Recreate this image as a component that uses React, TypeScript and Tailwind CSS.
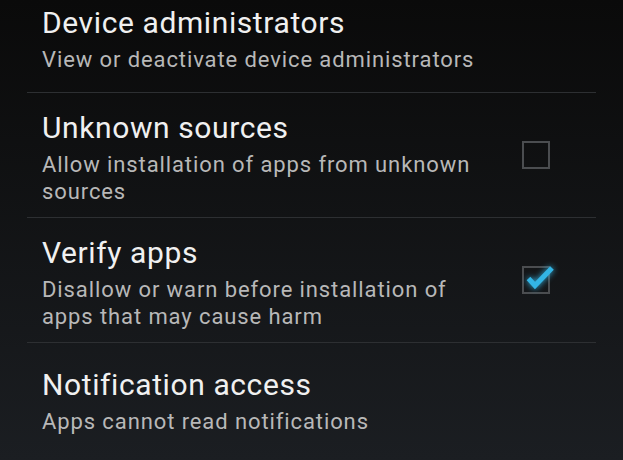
const rows = [
    { title: 'Device administrators', summary: ['View or deactivate device administrators'] },
    { title: 'Unknown sources', summary: ['Allow installation of apps from unknown', 'sources'], check: false },
    { title: 'Verify apps', summary: ['Disallow or warn before installation of', 'apps that may cause harm'], check: true },
    { title: 'Notification access', summary: ['Apps cannot read notifications'] },
]

function CheckBox({ checked }: { checked: boolean }) {
    return (
        <div className="relative h-[28px] w-[28px] border-2 border-[#4b4d50]">
            {checked && (
                <svg
                    className="absolute left-[-2px] top-[-2px] overflow-visible drop-shadow-[0_0_3px_#33b5e5]"
                    width="28"
                    height="28"
                    viewBox="0 0 28 28"
                >
                    <path d="M6.5 12.5 L13 19.5 L30 2" fill="none" stroke="#33b5e5" strokeWidth="5" />
                </svg>
            )}
        </div>
    )
}

export default function App() {
    return (
        <div
            className="h-[460px] w-full overflow-hidden bg-linear-to-b from-[#0a0a0a] to-[#1b1e22]"
            style={{ fontFamily: 'Roboto, "Liberation Sans", sans-serif' }}
        >
            <div className="-mt-[19px] mx-[27px]">
                {rows.map((row, i) => (
                    <div key={row.title}>
                        {i > 0 && <div className="h-px bg-[#2d2f32]" />}
                        <div
                            className={`flex items-center pl-[15px] pr-[46px] ${
                                row.summary.length > 1 ? 'h-[124px]' : 'h-[111px]'
                            }`}
                        >
                            <div className="flex-1">
                                <div className="text-[30px] leading-[46px] tracking-[0.6px] text-[#f0f0f0]">
                                    {row.title}
                                </div>
                                {row.summary.map((line) => (
                                    <div key={line} className="text-[22px] leading-[27px] tracking-[0.9px] text-[#b8b8b8]">
                                        {line}
                                    </div>
                                ))}
                            </div>
                            {row.check !== undefined && <CheckBox checked={row.check} />}
                        </div>
                    </div>
                ))}
            </div>
        </div>
    )
}
